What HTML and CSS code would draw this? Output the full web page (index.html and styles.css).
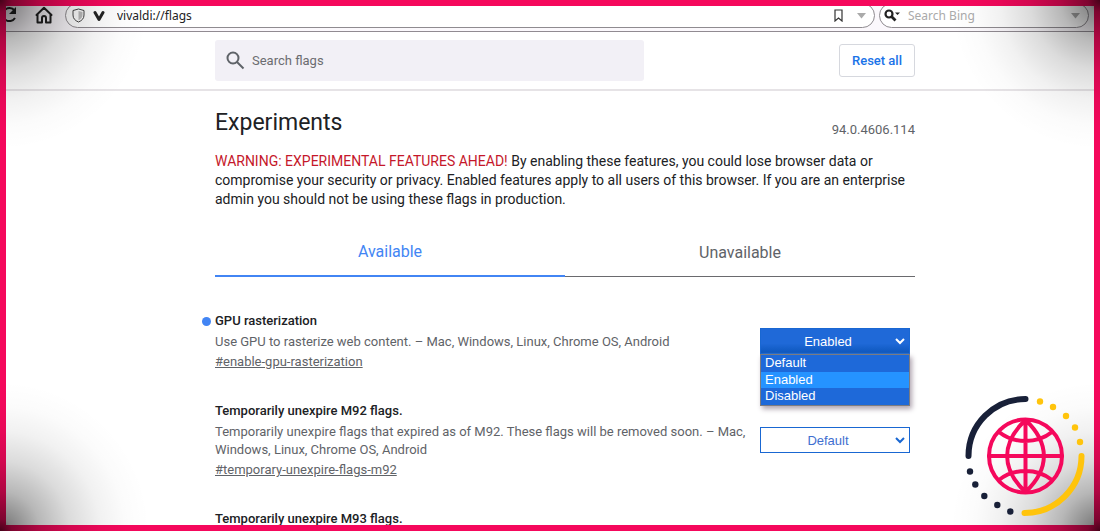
FILE: index.html
```html
<!DOCTYPE html>
<html lang="en">
<head>
<meta charset="utf-8">
<title>Experiments</title>
<link rel="stylesheet" href="styles.css">
</head>
<body>
<div class="frame">
  <nav class="toolbar">
    <button class="tool reload" aria-label="Reload"><svg width="18" height="18" viewBox="0 0 18 18" fill="none" stroke="#222" stroke-width="2"><path d="M14.5 4.5A6.5 6.5 0 1 0 15 12"/><path d="M16 1v7H9z" fill="#222" stroke="none"/></svg></button>
    <button class="tool home" aria-label="Home"><svg width="18" height="18" viewBox="0 0 18 18" fill="none" stroke="#222" stroke-width="2" stroke-linejoin="round" stroke-linecap="round"><path d="M1.500 9 9 1.800 16.500 9M2.500 8v8.500H7V12a2 2 0 0 1 4 0v4.500h4.500V8"/></svg></button>
    <div class="field address">
      <svg width="13" height="15" viewBox="0 0 13 15"><path d="M6.500 1 12 2.500V7c0 3.500-2 5.500-5.500 7C3 12.500 1 10.500 1 7V2.500z" fill="#fff" stroke="#444"/><path d="M6.500 3 10.500 4v3c0 2.500-1.500 4-4 5.300z" fill="#bbb"/></svg>
      <svg width="12" height="12" viewBox="0 0 12 12"><path d="M2 2.500 6 9.500 10 2.500" fill="none" stroke="#222" stroke-width="3" stroke-linecap="round" stroke-linejoin="round"/></svg>
      <input class="url" aria-label="Address" value="vivaldi://flags">
      <svg width="9" height="13" viewBox="0 0 9 13"><path d="M1 1h7v11L4.500 9 1 12z" fill="#fff" stroke="#333" stroke-width="1.200"/></svg>
      <svg class="caret" width="9" height="6" viewBox="0 0 9 6"><path d="M0 0h9L4.500 5.500z" fill="#aaa"/></svg>
    </div>
    <div class="field bing">
      <svg width="16" height="13" viewBox="0 0 16 13"><circle cx="5" cy="5" r="3.500" fill="none" stroke="#222" stroke-width="2.200"/><path d="m7.500 7.500 4 4" stroke="#222" stroke-width="2.800"/><path d="M11 3.500h5L13.500 6z" fill="#222"/></svg>
      <input class="url" aria-label="Search Bing" placeholder="Search Bing">
      <svg class="caret" width="9" height="6" viewBox="0 0 9 6"><path d="M0 0h9L4.500 5.500z" fill="#aaa"/></svg>
    </div>
  </nav>

  <header class="header">
    <div class="column header-row">
      <label class="search">
        <svg width="19" height="19" viewBox="0 0 19 19" fill="none" stroke="#5f6368" stroke-width="2"><circle cx="7" cy="7" r="5.500"/><path d="m11 11 6.500 6.500"/></svg>
        <input type="search" placeholder="Search flags" aria-label="Search flags">
      </label>
      <button class="reset">Reset all</button>
    </div>
  </header>

  <main class="column content">
    <div class="title-row">
      <h1>Experiments</h1>
      <span class="version">94.0.4606.114</span>
    </div>
    <p class="warning"><span class="alert">WARNING: EXPERIMENTAL FEATURES AHEAD!</span> By enabling these features, you could lose browser data or compromise your security or privacy. Enabled features apply to all users of this browser. If you are an enterprise admin you should not be using these flags in production.</p>
    <div class="tabs" role="tablist">
      <button class="tab selected" role="tab" aria-selected="true">Available</button>
      <button class="tab" role="tab" aria-selected="false">Unavailable</button>
    </div>

    <section class="flag">
      <div class="info">
        <h2 class="changed">GPU rasterization</h2>
        <p>Use GPU to rasterize web content. – Mac, Windows, Linux, Chrome OS, Android</p>
        <a href="#enable-gpu-rasterization">#enable-gpu-rasterization</a>
      </div>
      <div class="choice">
        <select class="active" aria-label="GPU rasterization"><option>Default</option><option selected>Enabled</option><option>Disabled</option></select>
        <svg class="chevron light" width="10" height="7" viewBox="0 0 10 7"><path d="m1 1 4 4 4-4"/></svg>
        <ul class="menu" role="listbox" aria-label="GPU rasterization options">
          <li role="option">Default</li>
          <li role="option" class="current" aria-selected="true">Enabled</li>
          <li role="option">Disabled</li>
        </ul>
      </div>
    </section>
    <section class="flag">
      <div class="info">
        <h2>Temporarily unexpire M92 flags.</h2>
        <p>Temporarily unexpire flags that expired as of M92. These flags will be removed soon. – Mac, Windows, Linux, Chrome OS, Android</p>
        <a href="#temporary-unexpire-flags-m92">#temporary-unexpire-flags-m92</a>
      </div>
      <div class="choice">
        <select aria-label="Temporarily unexpire M92 flags"><option>Default</option><option>Enabled</option><option>Disabled</option></select>
        <svg class="chevron" width="10" height="7" viewBox="0 0 10 7"><path d="m1 1 4 4 4-4"/></svg>
      </div>
    </section>
    <section class="flag">
      <div class="info">
        <h2>Temporarily unexpire M93 flags.</h2>
      </div>
    </section>
  </main>
</div>
<div class="vignette"></div>
<svg class="logo" width="120" height="120" viewBox="0 0 120 120" fill="none" stroke-linecap="round">
  <path d="M3.500 60A57 57 0 0 1 60.500 3" stroke="#182038" stroke-width="6"/>
  <path d="M116.500 60A57 57 0 0 1 59.500 117" stroke="#ffc40c" stroke-width="6"/>
  <g fill="#ffc40c"><circle cx="75" cy="5.500" r="3.200"/><circle cx="88" cy="11" r="3.200"/><circle cx="101" cy="20" r="3.200"/><circle cx="110" cy="31.500" r="3.200"/><circle cx="115" cy="46" r="3.200"/></g>
  <g fill="#182038"><circle cx="5" cy="75.500" r="3.200"/><circle cx="10.300" cy="88.500" r="3.200"/><circle cx="19.300" cy="100" r="3.200"/><circle cx="32.300" cy="109" r="3.200"/><circle cx="45.300" cy="115.500" r="3.200"/></g>
  <g stroke="#f5085c" stroke-width="4"><circle cx="60.500" cy="60" r="36.500"/><path d="M60.500 24v72M24 60h73M60.500 24C36 47 36 73 60.500 96M60.500 24C85 47 85 73 60.500 96M34 36C49 48 72 48 87 36M34 84C49 72 72 72 87 84"/></g>
</svg>
</body>
</html>
```
FILE: styles.css
```css
* { box-sizing: border-box; }
html { height: 100%; }
body {
  margin: 0;
  height: 100%;
  position: relative;
  overflow: hidden;
  font-family: Roboto, sans-serif;
  font-size: 13px;
  color: #202124;
  background: #fff;
}
button, input, select { font: inherit; }
h1, h2, p, ul { margin: 0; padding: 0; font-weight: 400; }
.frame { height: 100%; overflow: hidden; border: 6px solid #f5085c; }

.toolbar {
  display: flex;
  align-items: flex-end;
  height: 26px;
  padding: 0 5px 3px 0;
  overflow: hidden;
  border-bottom: 1px solid #918b92;
  background: #fbf8fc;
}
.tool { display: flex; padding: 0; border: 0; background: none; margin-bottom: 4px; }
.reload { margin-left: -6px; }
.home { margin-left: 17px; }
.field {
  display: flex;
  flex-shrink: 0;
  align-items: center;
  gap: 8px;
  height: 25px;
  padding: 0 8px 0 6px;
  border: 1px solid #8f8b90;
  border-radius: 14px;
  background: #fff;
}
.address { flex: 1; margin-left: 12px; }
.bing { width: 210px; margin-left: 4px; padding-left: 4px; }
.url {
  flex: 1;
  min-width: 0;
  padding: 0;
  border: 0;
  background: none;
  font-family: "Noto Sans", sans-serif;
  font-size: 12px;
  color: #222;
}
.address .url { padding-left: 4px; }
.url::placeholder { color: #aaa; }
.address .caret { margin-left: 6px; }

.column { max-width: 730px; width: 100%; margin: 0 auto; padding-left: 30px; }
.header { padding: 8px 0; border-bottom: 2px solid #e6e3e6; }
.header-row { display: flex; align-items: center; justify-content: space-between; }
.search {
  display: flex;
  align-items: center;
  gap: 7px;
  width: 429px;
  height: 41px;
  padding: 0 11px;
  border-radius: 3px;
  background: #f2f0f6;
}
.search input { flex: 1; padding: 0; border: 0; background: none; outline: 0; }
.search input::placeholder { color: #6b6c70; }
.reset {
  height: 33px;
  padding: 0 12px;
  border: 1px solid #d6d8de;
  border-radius: 3px;
  background: #fff;
  color: #1a73e8;
  font-weight: 500;
}

.content { padding-top: 16px; }
.title-row { display: flex; align-items: flex-end; justify-content: space-between; }
h1 { font-size: 23px; line-height: 32px; }
.version { color: #5f6368; line-height: 18px; }
.warning { margin-top: 13px; font-size: 14px; line-height: 19px; }
.alert { color: #c5172a; }
.tabs { display: flex; margin-top: 19px; }
.tab {
  flex: 1;
  height: 49px;
  padding: 0;
  border: 0;
  border-bottom: 1px solid #6a6a6e;
  background: none;
  color: #5f6368;
  font-size: 16px;
}
.selected { border-bottom: 2px solid #4285f4; color: #4285f4; }

.flag { display: flex; align-items: center; justify-content: space-between; padding: 0 5px 30px 0; }
.tabs + .flag { padding-top: 34px; }
.info { width: 535px; }
h2 { position: relative; font-size: 13px; line-height: 20px; font-weight: 500; }
.changed::before {
  content: "";
  position: absolute;
  left: -13px;
  top: 6px;
  width: 9px;
  height: 9px;
  border-radius: 50%;
  background: #4285f4;
}
.info p { margin-top: 2px; line-height: 18px; color: #5f6368; }
.info a { display: inline-block; margin-top: 2px; line-height: 18px; color: #5f6368; }

.choice {
  position: relative;
  width: 150px;
  font-family: "Liberation Sans", Arial, sans-serif;
}
select {
  appearance: none;
  display: block;
  width: 100%;
  height: 26px;
  padding: 0 14px 0 0;
  border: 1px solid #1967d2;
  border-radius: 0;
  background: #fff;
  color: #3f6fd0;
  text-align-last: center;
}
.active { background: linear-gradient(#1f69d8 60%, #0d57bd); color: #fff; }
.chevron { position: absolute; right: 5px; top: 10px; fill: none; stroke: #1967d2; stroke-width: 2; }
.light { stroke: #fff; }
.menu {
  position: absolute;
  top: 26px;
  left: 0;
  right: 0;
  padding-bottom: 1px;
  list-style: none;
  border: 1px solid #7b7b80;
  background: #1e69d9;
  color: #fff;
  box-shadow: 2px 3px 5px #b0a5b0;
}
.menu li { padding: 0 4px; line-height: 16px; }
.menu li:first-child { padding-bottom: 1px; }
.menu .current { background: #2593ff; }

.vignette {
  --shade: #000000b8, #0000007c 12px, #00000048 40px, #00000024 70px, #0000000e 100px, #00000004 125px, #0000 150px;
  position: absolute;
  inset: 0;
  pointer-events: none;
  background:
    radial-gradient(circle at 0 0, var(--shade)),
    radial-gradient(circle at 100% 0, var(--shade)),
    radial-gradient(circle at 0 100%, var(--shade)),
    radial-gradient(circle at 100% 100%, var(--shade));
}
.logo { position: absolute; right: 15px; bottom: 15px; overflow: visible; }
```
